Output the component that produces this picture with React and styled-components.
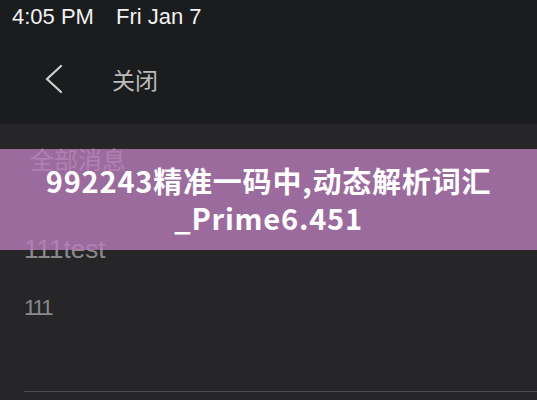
import React from 'react'
import styled, { createGlobalStyle } from 'styled-components'

const Global = createGlobalStyle`
    html, body {
        margin: 0;
        padding: 0;
        background: #262628;
    }
    * {
        box-sizing: border-box;
    }
`

const Screen = styled.div`
    position: relative;
    width: 537px;
    height: 400px;
    overflow: hidden;
    background: #262628;
    font-family: 'Liberation Sans', 'Noto Sans CJK SC', sans-serif;
`

const Header = styled.div`
    height: 124px;
    background: #1b1c1e;
    display: flex;
    flex-direction: column;
`

const StatusBar = styled.div`
    display: flex;
    gap: 22px;
    padding: 4px 0 0 12px;
    height: 44px;
    color: #f2f2f2;
    font-size: 22px;
    line-height: 26px;
`

const NavBar = styled.div`
    display: flex;
    align-items: center;
    height: 70px;
    padding-left: 44px;
    gap: 48px;
`

const BackButton = styled.button`
    display: flex;
    align-items: center;
    background: none;
    border: 0;
    padding: 0;
    color: #cfcfcf;
`

const NavTitle = styled.span`
    color: #bdbdbd;
    font-family: 'Noto Sans CJK SC', sans-serif;
    font-size: 23px;
    line-height: 30px;
`

const List = styled.div`
    padding: 20px 0 0 24px;
    display: flex;
    flex-direction: column;
`

const SectionTitle = styled.div`
    color: #8a8a8a;
    font-family: 'Noto Sans CJK SC', sans-serif;
    font-size: 24px;
    line-height: 30px;
    padding-left: 6px;
`

const Item = styled.div`
    color: #8a8a8a;
    font-size: ${props => props.size}px;
    line-height: ${props => props.lh}px;
    margin-top: ${props => props.gap}px;
    letter-spacing: ${props => props.ls || 0}px;
`

const Divider = styled.div`
    margin-top: 69px;
    height: 1px;
    background: #4e4e50;
`

const Banner = styled.div`
    position: absolute;
    left: 0;
    right: 0;
    top: 149px;
    height: 101px;
    background: rgba(187, 126, 190, 0.79);
    display: flex;
    flex-direction: column;
    align-items: center;
    justify-content: center;
    padding-bottom: 2px;
    color: #fff;
    font-family: 'Noto Sans CJK SC', sans-serif;
    font-weight: 700;
    font-size: 29px;
    line-height: 37px;
    text-align: center;
    letter-spacing: 0.8px;
`

const Chevron = () => (
    <svg width="20" height="30" viewBox="0 0 20 30" fill="none">
        <path d="M17 2 L3 15 L17 28" stroke="currentColor" strokeWidth="2.2" strokeLinecap="round" strokeLinejoin="miter" />
    </svg>
)

export default function App() {
    return (
        <Screen>
            <Global />
            <Header>
                <StatusBar>
                    <span>4:05 PM</span>
                    <span>Fri Jan 7</span>
                </StatusBar>
                <NavBar>
                    <BackButton>
                        <Chevron />
                    </BackButton>
                    <NavTitle>关闭</NavTitle>
                </NavBar>
            </Header>
            <List>
                <SectionTitle>全部消息</SectionTitle>
                <Item size={26} lh={30} gap={60}>111test</Item>
                <Item size={22} lh={28} gap={30} ls={-2}>111</Item>
                <Divider />
            </List>
            <Banner>
                <div>992243精准一码中,动态解析词汇</div>
                <div>_Prime6.451</div>
            </Banner>
        </Screen>
    )
}
